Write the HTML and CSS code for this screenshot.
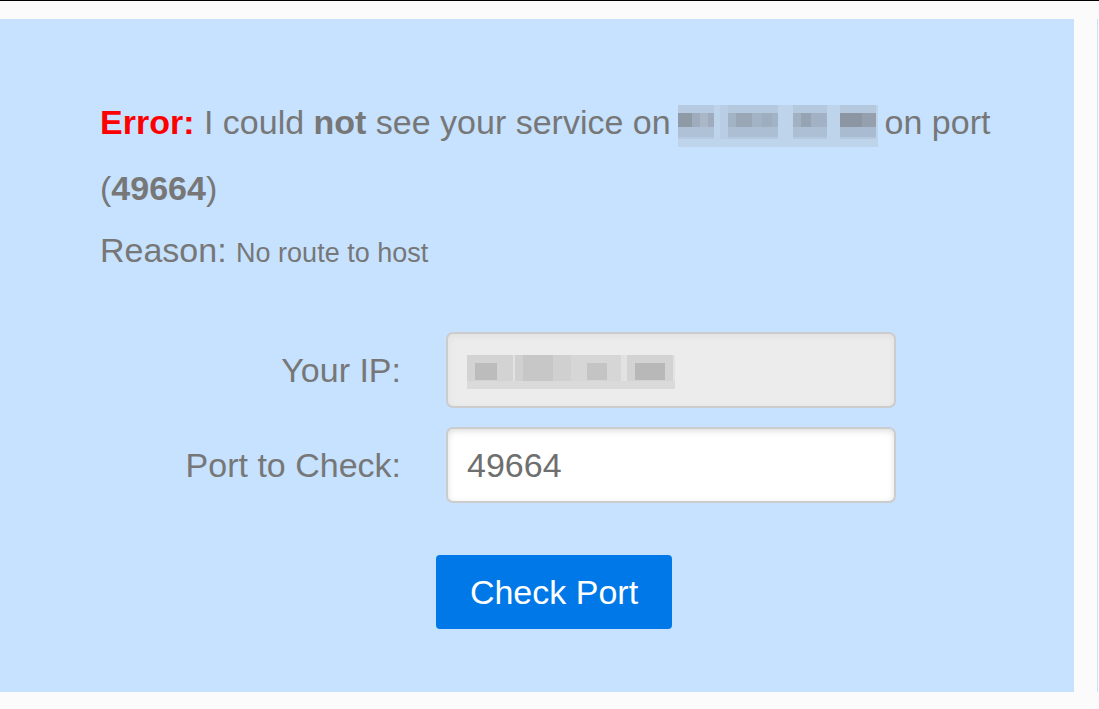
FILE: index.html
```html
<!DOCTYPE html>
<html>
<head>
<meta charset="utf-8">
<link rel="stylesheet" href="styles.css">
</head>
<body>
<div class="page">
  <main class="panel">
    <p class="result"><strong class="err">Error:</strong> I could <strong>not</strong> see your service on <svg class="blur-ip" width="200" height="42" viewBox="0 0 200 42"><g>
      <rect x="0" y="0" width="200" height="42" fill="#bed4eb"/>
      <rect x="0" y="0" width="36" height="34" fill="#b6cbe2"/>
      <rect x="0" y="8" width="36" height="14" fill="#9eacbd"/>
      <rect x="0" y="8" width="14" height="14" fill="#8f9aa7"/>
      <rect x="22" y="8" width="8" height="14" fill="#aab7c7"/>
      <rect x="0" y="22" width="36" height="10" fill="#afc1d6"/>
      <rect x="42" y="0" width="8" height="34" fill="#b9cee4"/>
      <rect x="50" y="0" width="50" height="34" fill="#b4c8de"/>
      <rect x="50" y="8" width="50" height="14" fill="#a3b3c6"/>
      <rect x="58" y="8" width="16" height="14" fill="#98a6b6"/>
      <rect x="84" y="8" width="10" height="14" fill="#9eadbf"/>
      <rect x="50" y="22" width="50" height="10" fill="#acbed3"/>
      <rect x="115" y="0" width="34" height="34" fill="#b4c8de"/>
      <rect x="115" y="8" width="34" height="14" fill="#a2b1c3"/>
      <rect x="123" y="8" width="10" height="14" fill="#96a3b3"/>
      <rect x="115" y="22" width="34" height="10" fill="#adbfd4"/>
      <rect x="162" y="0" width="36" height="34" fill="#b4c8de"/>
      <rect x="162" y="8" width="36" height="14" fill="#94a0ae"/>
      <rect x="162" y="8" width="22" height="14" fill="#8c96a2"/>
      <rect x="162" y="22" width="36" height="10" fill="#a9bbd0"/>
    </g></svg> on port (<strong>49664</strong>)</p>
    <p class="reason">Reason: <span class="reason-text">No route to host</span></p>

    <form class="check-form">
      <div class="row">
        <label class="label">Your IP:</label>
        <div class="field field-disabled">
          <svg class="ip-blur" width="208" height="34" viewBox="0 0 208 34">
            <rect x="0" y="0" width="208" height="34" fill="#e2e2e2"/>
            <rect x="0" y="0" width="46" height="34" fill="#d3d3d3"/>
            <rect x="8" y="8" width="22" height="17" fill="#bcbcbc"/>
            <rect x="48" y="0" width="56" height="34" fill="#d0d0d0"/>
            <rect x="56" y="0" width="30" height="26" fill="#c7c7c7"/>
            <rect x="104" y="0" width="50" height="34" fill="#d6d6d6"/>
            <rect x="120" y="8" width="20" height="17" fill="#c4c4c4"/>
            <rect x="160" y="0" width="46" height="34" fill="#d3d3d3"/>
            <rect x="168" y="8" width="30" height="17" fill="#b8b8b8"/>
            <rect x="0" y="26" width="208" height="8" fill="#dadada"/>
          </svg>
        </div>
      </div>
      <div class="row">
        <label class="label" for="port">Port to Check:</label>
        <div class="field"><span class="value">49664</span></div>
      </div>
      <div class="controls">
        <button type="button" class="btn">Check Port</button>
      </div>
    </form>
  </main>
  <div class="side-line"></div>
</div>
</body>
</html>
```

FILE: styles.css
```css
html, body {
  margin: 0;
  padding: 0;
}
body {
  background: #fbfbfb;
  border-top: 1px solid #000;
  font-family: "Liberation Sans", Arial, sans-serif;
  color: #777;
  height: 708px;
  overflow: hidden;
}
.page {
  display: flex;
  align-items: flex-start;
  padding-top: 18px;
}
.panel {
  width: 1074px;
  height: 673px;
  box-sizing: border-box;
  background: #c6e2ff;
  padding: 70px 60px 0 100px;
  flex-shrink: 0;
}
.side-line {
  width: 1px;
  height: 673px;
  background: #c6e2ff;
  margin-left: 23px;
}
.result {
  margin: 0;
  font-size: 34px;
  line-height: 66px;
}
.result strong {
  font-weight: bold;
}
.err {
  color: #ff0000;
}
.blur-ip {
  display: inline-block;
  vertical-align: -13px;
  margin-left: -2px;
  margin-right: -3px;
}
.reason {
  margin: 10px 0 0;
  font-size: 34px;
  line-height: 38px;
}
.reason-text {
  font-size: 27px;
}
.check-form {
  margin-top: 60px;
  margin-left: -27px;
  display: flex;
  flex-direction: column;
  gap: 19px;
}
.row {
  display: flex;
  align-items: center;
}
.label {
  width: 328px;
  text-align: right;
  font-size: 34px;
  margin-right: 45px;
}
.field {
  width: 450px;
  height: 76px;
  box-sizing: border-box;
  border: 2px solid #cccccc;
  border-radius: 7px;
  background: #fff;
  box-shadow: inset 0 2px 6px #dddddd;
  padding: 0 19px;
  display: flex;
  align-items: center;
  font-size: 34px;
  color: #6f6f6f;
}
.field-disabled {
  background: #ececec;
  box-shadow: inset 0 2px 6px #e0e0e0;
}
.ip-blur {
  display: block;
  margin-top: 4px;
}
.controls {
  margin-top: 33px;
  padding-left: 363px;
}
.btn {
  width: 236px;
  height: 74px;
  border: none;
  border-radius: 4px;
  background: #0078e7;
  color: #fff;
  font-family: "Liberation Sans", Arial, sans-serif;
  font-size: 34px;
  padding: 0;
  cursor: pointer;
}
```
